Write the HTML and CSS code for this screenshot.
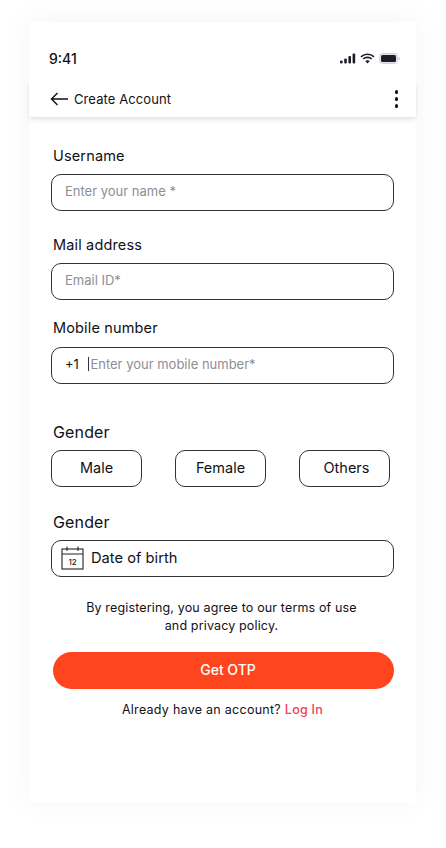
FILE: index.html
```html
<!DOCTYPE html>
<html>
    <head>
        <meta name="viewport" content="width=device-width, initial-scale=1">
        <link rel="stylesheet" href="styles.css">
    </head>
    <body>
        <div class="phone">
            <div class="status-bar">
                <span class="time">9:41</span>
                <div class="status-icons">
                    <svg width="16" height="11" viewBox="0 0 16 11">
                        <rect x="0" y="7.5" width="2.6" height="3" rx="1" fill="#1c1c28"/>
                        <rect x="4.2" y="5.5" width="2.6" height="5" rx="1" fill="#1c1c28"/>
                        <rect x="8.4" y="3" width="2.6" height="7.5" rx="1" fill="#1c1c28"/>
                        <rect x="12.6" y="0.5" width="2.6" height="10" rx="1" fill="#1c1c28"/>
                    </svg>
                    <svg width="15" height="11" viewBox="0 0 15 11">
                        <path d="M1 3.8C4.6 .4 10.4 .4 14 3.8M3.2 6C5.6 3.8 9.4 3.8 11.8 6" fill="none" stroke="#1c1c28" stroke-width="1.6"/>
                        <path d="M5.2 8 7.5 10.6 9.8 8C8.5 6.9 6.5 6.9 5.2 8Z" fill="#1c1c28"/>
                    </svg>
                    <svg width="21" height="11" viewBox="0 0 21 11">
                        <rect x="0.5" y="0.5" width="18" height="10" rx="3" fill="#e4e4ea" stroke="#d2d2da"/>
                        <rect x="2" y="2" width="15" height="7" rx="1.5" fill="#1c1c28"/>
                        <rect x="19.5" y="4" width="1.2" height="3" rx="0.6" fill="#c4c4cc"/>
                    </svg>
                </div>
            </div>
            <div class="nav-bar">
                <div class="nav-left">
                    <svg width="19" height="14" viewBox="0 0 19 14">
                        <path d="M18 7H1.5M7.5 1 1.5 7l6 6" fill="none" stroke="#111" stroke-width="1.4"/>
                    </svg>
                    <span class="nav-title">Create Account</span>
                </div>
                <div class="more">
                    <span class="dot"></span>
                    <span class="dot"></span>
                    <span class="dot"></span>
                </div>
            </div>
            <div class="form">
                <div class="label">Username</div>
                <div class="field"><span class="placeholder">Enter your name *</span></div>

                <div class="label label-mail">Mail address</div>
                <div class="field"><span class="placeholder">Email ID*</span></div>

                <div class="label label-mobile">Mobile number</div>
                <div class="field">
                    <span class="code">+1</span>
                    <span class="cursor"></span>
                    <span class="placeholder placeholder-tight">Enter your mobile number*</span>
                </div>

                <div class="label label-big label-gender">Gender</div>
                <div class="gender-row">
                    <div class="gender-button">Male</div>
                    <div class="gender-button">Female</div>
                    <div class="gender-button gender-last">Others</div>
                </div>

                <div class="label label-big label-dob">Gender</div>
                <div class="field field-date">
                    <svg width="23" height="24" viewBox="0 0 23 24">
                        <rect x="1" y="3" width="21" height="20" fill="none" stroke="#222" stroke-width="1.1"/>
                        <path d="M1 8H22M6 .5V5M17 .5V5" fill="none" stroke="#222" stroke-width="1.1"/>
                        <text x="11.5" y="19" text-anchor="middle" class="calendar-day">12</text>
                    </svg>
                    <span class="date-text">Date of birth</span>
                </div>

                <p class="terms">By registering, you agree to our terms of use<br>and privacy policy.</p>
                <div class="otp-button">Get OTP</div>
                <p class="login">Already have an account? <span class="login-link">Log In</span></p>
            </div>
        </div>
    </body>
</html>
```

FILE: styles.css
```css
* {
    box-sizing: border-box;
}

body {
    margin: 0;
    height: 848px;
    overflow: hidden;
    background-color: #ffffff;
    font-family: "Inter", "Open Sans", sans-serif;
    color: #111116;
}

.phone {
    width: 387px;
    height: 780px;
    margin: 22px 0 0 29px;
    background-color: white;
    box-shadow: 0 -2px 28px 0 rgba(110, 80, 110, 0.06);
}

.status-bar {
    height: 58px;
    padding: 28px 16px 0 20px;
    display: flex;
    justify-content: space-between;
    align-items: flex-start;
}

.time {
    font-size: 14px;
    line-height: 17px;
    font-weight: 500;
}

.status-icons {
    display: flex;
    align-items: center;
    gap: 4px;
    margin-top: 3px;
}

.nav-bar {
    height: 37px;
    padding: 0 18px 0 21px;
    display: flex;
    justify-content: space-between;
    align-items: center;
    box-shadow: 0 3px 5px -1px rgba(0, 0, 0, 0.14);
    position: relative;
}

.nav-left {
    display: flex;
    align-items: center;
    gap: 5px;
}

.nav-title {
    font-size: 13px;
    font-weight: 400;
    letter-spacing: 0.1px;
}

.more {
    display: flex;
    flex-direction: column;
    gap: 3.5px;
    margin-top: 1px;
}

.dot {
    width: 3.5px;
    height: 3.5px;
    border-radius: 50%;
    background-color: #111;
}

.form {
    padding: 30px 22px 0 22px;
}

.label {
    font-size: 14.5px;
    line-height: 18px;
    font-weight: 400;
    letter-spacing: 0.15px;
    margin: 0 0 9px 2px;
}

.label-mail {
    margin-top: 25px;
}

.label-mobile {
    margin-top: 19px;
    margin-bottom: 10px;
}

.label-big {
    font-size: 16px;
}

.label-gender {
    margin-top: 39px;
}

.label-dob {
    margin-top: 26px;
}

.field {
    width: 343px;
    height: 37px;
    border: 1px solid #333333;
    border-radius: 10px;
    display: flex;
    align-items: center;
    padding: 0 0 3px 13px;
    font-size: 13px;
}

.placeholder {
    color: #8e8e93;
}

.placeholder-tight {
    margin-left: 1px;
}

.code {
    font-weight: 400;
}

.cursor {
    width: 1.5px;
    height: 14px;
    margin-left: 9px;
    background-color: #333333;
}

.gender-row {
    display: flex;
    gap: 33px;
}

.gender-button {
    width: 91px;
    height: 37px;
    border: 1px solid #333333;
    border-radius: 10px;
    display: flex;
    align-items: center;
    justify-content: center;
    padding-bottom: 2px;
    font-size: 14.5px;
    font-weight: 400;
}

.gender-last {
    padding-left: 4px;
}

.field-date {
    padding: 0 0 1px 9px;
    gap: 7px;
}

.calendar-day {
    font-size: 8px;
    font-weight: 500;
    fill: #222;
}

.date-text {
    font-size: 14.7px;
    font-weight: 400;
}

.terms {
    margin: 22px 0 0 0;
    width: 341px;
    text-align: center;
    font-size: 12.5px;
    line-height: 18px;
    font-weight: 400;
    letter-spacing: 0.15px;
}

.otp-button {
    width: 341px;
    height: 37px;
    margin: 17px 0 0 2px;
    border-radius: 19px;
    background-color: #ff451e;
    color: white;
    display: flex;
    align-items: center;
    justify-content: center;
    padding-left: 9px;
    padding-bottom: 3px;
    font-size: 14px;
    font-weight: 500;
}

.login {
    margin: 13px 0 0 0;
    width: 343px;
    text-align: center;
    font-size: 12.5px;
    line-height: 16px;
    font-weight: 400;
    letter-spacing: 0.27px;
}

.login-link {
    color: #f0414f;
    font-weight: 500;
}
```
